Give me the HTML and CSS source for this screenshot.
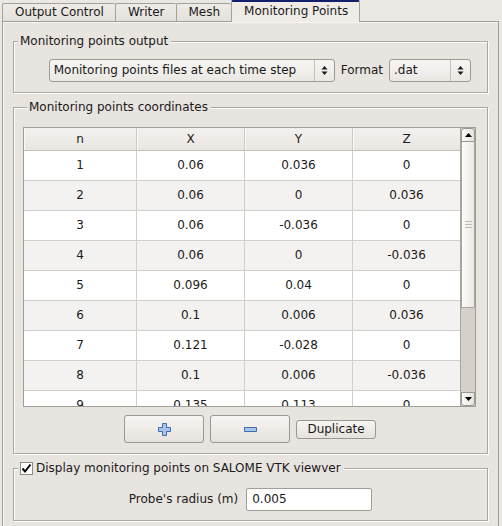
FILE: index.html
```html
<!DOCTYPE html>
<html>
<head>
<meta charset="utf-8">
<link rel="stylesheet" href="styles.css">
</head>
<body>
<div class="tabbar">
  <div class="tab">Output Control</div>
  <div class="tab">Writer</div>
  <div class="tab">Mesh</div>
  <div class="tab active">Monitoring Points</div>
</div>
<div class="pane">
  <fieldset class="group g1">
    <legend>Monitoring points output</legend>
    <div class="out-row">
      <div class="combo combo-main">
        <span class="combo-text">Monitoring points files at each time step</span>
        <span class="combo-arrow"><svg width="7" height="11" viewBox="0 0 7 11"><path d="M0.5 4.5 L3.5 1 L6.5 4.5 Z M0.5 6.5 L3.5 10 L6.5 6.5 Z" fill="#1e1e1e"/></svg></span>
      </div>
      <span class="lbl">Format</span>
      <div class="combo combo-fmt">
        <span class="combo-text">.dat</span>
        <span class="combo-arrow"><svg width="7" height="11" viewBox="0 0 7 11"><path d="M0.5 4.5 L3.5 1 L6.5 4.5 Z M0.5 6.5 L3.5 10 L6.5 6.5 Z" fill="#1e1e1e"/></svg></span>
      </div>
    </div>
  </fieldset>

  <fieldset class="group g2">
    <legend>Monitoring points coordinates</legend>
    <div class="table">
      <div class="grid">
        <div class="hcell">n</div><div class="hcell">X</div><div class="hcell">Y</div><div class="hcell last">Z</div>
        <div class="cell">1</div><div class="cell">0.06</div><div class="cell">0.036</div><div class="cell last">0</div>
        <div class="cell alt">2</div><div class="cell alt">0.06</div><div class="cell alt">0</div><div class="cell alt last">0.036</div>
        <div class="cell">3</div><div class="cell">0.06</div><div class="cell">-0.036</div><div class="cell last">0</div>
        <div class="cell alt">4</div><div class="cell alt">0.06</div><div class="cell alt">0</div><div class="cell alt last">-0.036</div>
        <div class="cell">5</div><div class="cell">0.096</div><div class="cell">0.04</div><div class="cell last">0</div>
        <div class="cell alt">6</div><div class="cell alt">0.1</div><div class="cell alt">0.006</div><div class="cell alt last">0.036</div>
        <div class="cell">7</div><div class="cell">0.121</div><div class="cell">-0.028</div><div class="cell last">0</div>
        <div class="cell alt">8</div><div class="cell alt">0.1</div><div class="cell alt">0.006</div><div class="cell alt last">-0.036</div>
        <div class="cell">9</div><div class="cell">0.135</div><div class="cell">0.113</div><div class="cell last">0</div>
      </div>
      <div class="sb">
        <div class="sb-btn sb-up"><svg width="7" height="4" viewBox="0 0 7 4"><path d="M0 4 L3.5 0 L7 4 Z" fill="#000"/></svg></div>
        <div class="sb-handle"><span class="grip"></span><span class="grip"></span><span class="grip"></span></div>
        <div class="sb-trough"></div>
        <div class="sb-btn sb-down"><svg width="7" height="4" viewBox="0 0 7 4"><path d="M0 0 L3.5 4 L7 0 Z" fill="#000"/></svg></div>
      </div>
    </div>
    <div class="btn-row">
      <button class="btn btn-icon"><svg width="15" height="15" viewBox="0 0 15 15"><path d="M5.5 1.5 H9.5 V5.5 H13.5 V9.5 H9.5 V13.5 H5.5 V9.5 H1.5 V5.5 H5.5 Z" fill="#a9c3e8" stroke="#3d6cb0" stroke-width="1"/></svg></button>
      <button class="btn btn-icon"><svg width="15" height="7" viewBox="0 0 15 7"><path d="M1.5 1.5 H13.5 V5.5 H1.5 Z" fill="#a9c3e8" stroke="#3d6cb0" stroke-width="1"/></svg></button>
      <button class="btn btn-dup">Duplicate</button>
    </div>
  </fieldset>

  <fieldset class="group g3">
    <legend><span class="check"><svg width="11" height="11" viewBox="0 0 11 11"><path d="M1.5 5.5 L4 8.5 L9.5 1.5" fill="none" stroke="#000" stroke-width="2"/></svg></span><span>Display monitoring points on SALOME VTK viewver</span></legend>
    <div class="probe-row">
      <span class="lbl">Probe's radius (m)</span>
      <div class="input">0.005</div>
    </div>
  </fieldset>
</div>
</body>
</html>
```
FILE: styles.css
```css
* { box-sizing: border-box; }
html, body { margin: 0; padding: 0; }
body {
  width: 502px;
  height: 526px;
  overflow: hidden;
  background: #ebe8e4;
  font-family: "DejaVu Sans", sans-serif;
  font-size: 12px;
  color: #1a1a1a;
}

.tabbar {
  display: flex;
  align-items: flex-end;
  height: 21px;
  padding-left: 2px;
}
.tab {
  height: 18px;
  line-height: 16px;
  padding: 0 11px 0 12px;
  border: 1px solid #a5a19b;
  border-bottom: none;
  border-right: none;
  border-radius: 2px 2px 0 0;
  background: linear-gradient(#efece8, #e4e0db);
  white-space: nowrap;
}
.tab.active {
  position: relative;
  z-index: 1;
  height: 22px;
  margin-bottom: -1px;
  line-height: 18px;
  border-top: 2px solid #141f6c;
  border-right: 1px solid #a5a19b;
  background: #efebe7;
}

.pane {
  margin: 0 3px 0 2px;
  height: 505px;
  border: 1px solid #a19d97;
  border-bottom: none;
  background: #e8e4e0;
  box-shadow: inset 1px 1px 0 #f7f5f3;
  padding: 12px 10px 0 10px;
}

.group {
  margin: 0;
  min-width: 0;
  border: 1px solid #aaa6a0;
  box-shadow: 1px 1px 0 #ffffff, inset 1px 1px 0 #ffffff;
}
.group legend {
  margin-left: 4px;
  padding: 0 3px 0 2px;
  line-height: 14px;
  background: #e8e4e0;
}
.g1 { padding: 11px 16px 10px 0; }
.g2 { margin-top: 7px; padding: 13px 0 10px 9px; }
.g3 { margin-top: 7px; padding: 13px 0 9px 0; }

.out-row {
  display: flex;
  justify-content: flex-end;
  align-items: center;
  gap: 6px;
}
.lbl { line-height: 23px; white-space: nowrap; }
.combo {
  display: flex;
  height: 23px;
  border: 1px solid #9e9a94;
  border-radius: 3px;
  background: linear-gradient(#f7f5f3, #ebe8e4);
}
.combo-main { width: 286px; }
.combo-fmt { width: 82px; }
.combo-text {
  flex: 1;
  padding-left: 4px;
  line-height: 21px;
  white-space: nowrap;
}
.combo-arrow {
  width: 20px;
  border-left: 1px solid #c4c0ba;
  display: flex;
  align-items: center;
  justify-content: center;
}

.table {
  display: flex;
  width: 453px;
  height: 280px;
  border: 1px solid #a09c96;
  background: #ffffff;
}
.grid {
  width: 436px;
  overflow: hidden;
  display: grid;
  grid-template-columns: 113px 108px 108px 107px;
  grid-auto-rows: 30px;
  grid-template-rows: 23px;
  align-content: start;
}
.hcell {
  height: 23px;
  line-height: 22px;
  text-align: center;
  border-right: 1px solid #cdc9c4;
  border-bottom: 1px solid #c4c0ba;
  box-shadow: inset 1px 0 0 #fbfaf9;
  background: linear-gradient(#f3f1ee, #e9e6e2);
  color: #202020;
}
.cell {
  height: 30px;
  line-height: 29px;
  text-align: center;
  border-right: 1px solid #d2cfcb;
  border-bottom: 1px solid #d2cfcb;
  background: #ffffff;
}
.cell.alt { background: #f4f2f0; }
.last { border-right: none; }

.sb {
  width: 15px;
  border-left: 1px solid #a8a49e;
  display: flex;
  flex-direction: column;
  background: #d5d0c9;
}
.sb-btn {
  height: 14px;
  display: flex;
  align-items: center;
  justify-content: center;
  border: 1px solid #9b9791;
  background: linear-gradient(90deg, #fbfaf9, #e6e2de);
}
.sb-up { border-radius: 3px 3px 0 0; }
.sb-down { border-radius: 0 0 3px 3px; }
.sb-handle {
  height: 166px;
  border-left: 1px solid #a8a49e;
  border-right: 1px solid #a8a49e;
  border-bottom: 1px solid #a8a49e;
  background: linear-gradient(90deg, #fdfcfb, #ebe8e4);
  display: flex;
  flex-direction: column;
  align-items: center;
  justify-content: center;
  gap: 2px;
}
.grip {
  display: block;
  width: 7px;
  height: 1px;
  background: #bdb9b3;
}
.sb-trough { flex: 1; }

.btn-row {
  margin-top: 8px;
  display: flex;
  justify-content: center;
  align-items: center;
  gap: 6px;
  padding-right: 10px;
}
.btn {
  font-family: "DejaVu Sans", sans-serif;
  font-size: 12px;
  color: #1a1a1a;
  border: 1px solid #9b9791;
  border-radius: 3px;
  background: linear-gradient(#f7f5f3, #e6e2dd);
  padding: 0;
  margin: 0;
  display: flex;
  align-items: center;
  justify-content: center;
}
.btn-icon { width: 80px; height: 28px; }
.btn-dup { width: 80px; height: 19px; line-height: 17px; }

.g3 legend {
  display: flex;
  align-items: center;
  gap: 3px;
}
.check {
  width: 13px;
  height: 13px;
  border: 1px solid #8e8a84;
  background: #ffffff;
  display: flex;
  align-items: center;
  justify-content: center;
}

.probe-row {
  display: flex;
  justify-content: center;
  align-items: center;
  gap: 8px;
}
.input {
  width: 126px;
  height: 23px;
  border: 1px solid #a29e98;
  border-radius: 2px;
  background: #ffffff;
  padding-left: 5px;
  line-height: 21px;
}
```
